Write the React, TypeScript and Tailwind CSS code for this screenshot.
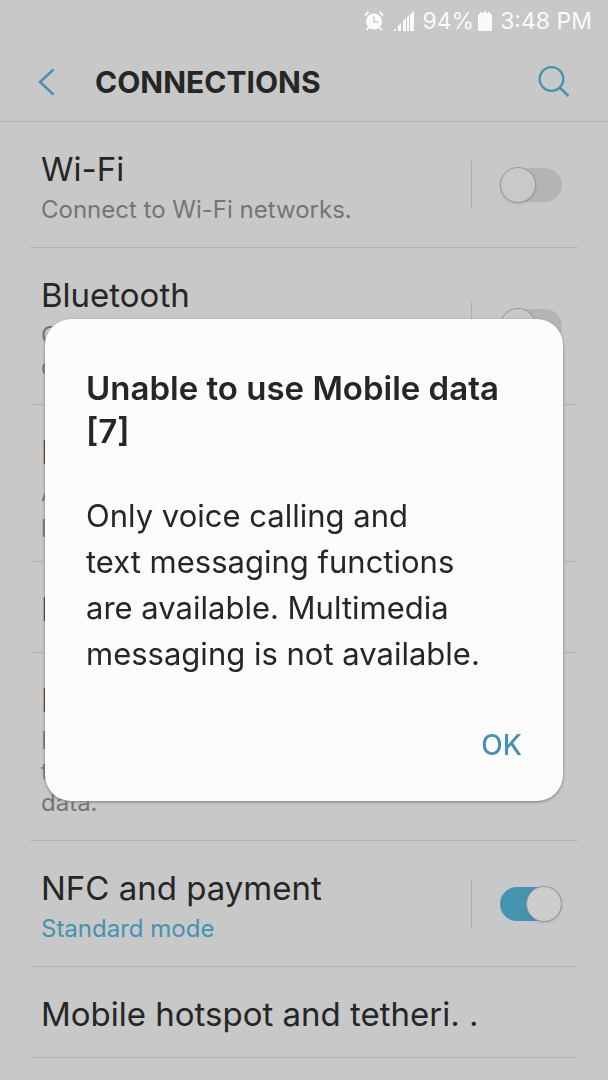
import { useState } from "react";

type Setting = {
  id: string;
  title: string;
  details?: string[];
  active?: boolean;
  toggle?: boolean;
};

const settings: Setting[] = [
  {
    id: "wifi",
    title: "Wi-Fi",
    details: ["Connect to Wi-Fi networks."],
    toggle: true,
  },
  {
    id: "bluetooth",
    title: "Bluetooth",
    details: ["Connect to nearby Bluetooth", "devices."],
    toggle: true,
  },
  {
    id: "visibility",
    title: "Phone visibility",
    details: ["Allow other devices to find", "phone and transfer files."],
    toggle: true,
  },
  { id: "usage", title: "Data usage" },
  {
    id: "flight",
    title: "Flight mode",
    details: ["Disable calling,", "text messaging and mobile", "data."],
    toggle: true,
  },
  {
    id: "nfc",
    title: "NFC and payment",
    details: ["Standard mode"],
    active: true,
    toggle: true,
  },
  { id: "hotspot", title: "Mobile hotspot and tetheri. ." },
];

const StatusBar = () => (
  <div className="flex h-[42px] items-center justify-end gap-2 pr-4 text-[23px] text-[#fafafa]">
    <svg viewBox="0 0 20 20" className="mr-0.5 size-5" aria-label="Alarm set">
      <circle cx="10" cy="10.5" r="8" fill="currentColor" />
      <path
        d="M1 4.5 4.5 1M19 4.5 15.500 1M4.500 16.500 2.500 19M15.500 16.500 17.500 19"
        stroke="currentColor"
        strokeWidth="2"
      />
      <path d="M10 5.500V11H14" fill="none" stroke="#c8c8c8" strokeWidth="1.300" />
    </svg>
    <svg viewBox="0 0 20 20" className="size-5" fill="currentColor" aria-label="Signal">
      <path d="M0 20v-1l2-2v3zM4 20v-5l3-3v8zM9 20V10l3-3v13zM13 20V6l2-2v16zM16 20V3.500L20 0v20z" />
    </svg>
    <span className="flex items-center gap-1">
      94%
      <svg viewBox="0 0 14 20" className="h-5 w-3.5" fill="currentColor" aria-label="Battery">
        <path d="M0 3h2V1h2v1h2V0h2v2h2V1h2v2h2v17H0z" />
      </svg>
    </span>
    <span>3:48 PM</span>
  </div>
);

const Header = () => (
  <header className="flex h-20 items-center border-b border-[#b3b3b3] pr-[38px] pl-[37px]">
    <button type="button" aria-label="Back" className="text-[#4393b1]">
      <svg viewBox="0 0 18 28" className="h-7 w-[18px]" fill="none">
        <path d="M16.500 1.500 3 14 16.500 26.500" stroke="currentColor" strokeWidth="2.500" />
      </svg>
    </button>
    <h1 className="flex-1 pl-10 text-3xl font-bold">CONNECTIONS</h1>
    <button type="button" aria-label="Search" className="text-[#4393b1]">
      <svg viewBox="0 0 32 32" className="size-8" fill="none" stroke="currentColor">
        <circle cx="13.500" cy="13" r="11.800" strokeWidth="2.300" />
        <path d="M21.500 21.500 30.500 30" strokeWidth="2.500" />
      </svg>
    </button>
  </header>
);

const SettingRow = ({ setting }: { setting: Setting }) => {
  const { id, title, details, active, toggle } = setting;
  const [on, setOn] = useState(!!active);

  return (
    <li className="mx-[30px] flex items-center justify-between border-b border-[#b3b3b3] pr-4 pl-[11px]">
      <div className="pt-[26px] pb-[22px] whitespace-nowrap">
        <label htmlFor={toggle ? id : undefined} className="block text-[33px] leading-[42px]">
          {title}
        </label>
        {details && (
          <p
            className={
              active
                ? "mt-1 text-2xl leading-[31px] text-[#4393b1]"
                : "mt-1 text-2xl leading-[31px] text-[#757575]"
            }
          >
            {details.map((line) => (
              <span key={line} className="block">
                {line}
              </span>
            ))}
          </p>
        )}
      </div>
      {toggle && (
        <div className="flex h-12 shrink-0 items-center border-l border-[#adadad] pl-7">
          <input
            id={id}
            type="checkbox"
            role="switch"
            checked={on}
            onChange={() => setOn(!on)}
            className="flex h-[34px] w-[62px] appearance-none items-center rounded-full bg-[#b3b5b5] before:size-9 before:shrink-0 before:rounded-full before:border before:border-[#999] before:bg-[#c9c9c9] before:shadow-sm checked:justify-end checked:bg-[#4393b1] checked:before:bg-[#cccccc]"
          />
        </div>
      )}
    </li>
  );
};

const App = () => {
  const [open, setOpen] = useState(true);

  return (
    <div className="min-h-screen bg-[#c8c8c8] font-['Inter',sans-serif] text-[#262626]">
      <StatusBar />
      <Header />
      <ul>
        {settings.map((setting) => (
          <SettingRow key={setting.id} setting={setting} />
        ))}
      </ul>

      {/* Error dialog */}
      {open && (
        <div className="fixed inset-0 flex items-center justify-center px-[45px] pt-10">
          <div
            role="alertdialog"
            aria-labelledby="dialog-title"
            aria-describedby="dialog-text"
            className="w-full max-w-xl rounded-[26px] bg-[#fcfcfc] px-[41px] pt-12 pb-7 shadow-[0_1px_3px_#777]"
          >
            <h2 id="dialog-title" className="text-[33px] leading-[43px] font-semibold">
              Unable to use Mobile data
              <br />
              [7]
            </h2>
            <p id="dialog-text" className="mt-10 text-[31px] leading-[46px]">
              Only voice calling and
              <br />
              text messaging functions
              <br />
              are available. Multimedia
              <br />
              messaging is not available.
            </p>
            <div className="mt-10 flex justify-end">
              <button
                type="button"
                onClick={() => setOpen(false)}
                className="h-14 text-[28px] font-medium text-[#4393b1]"
              >
                OK
              </button>
            </div>
          </div>
        </div>
      )}
    </div>
  );
};

export default App;
